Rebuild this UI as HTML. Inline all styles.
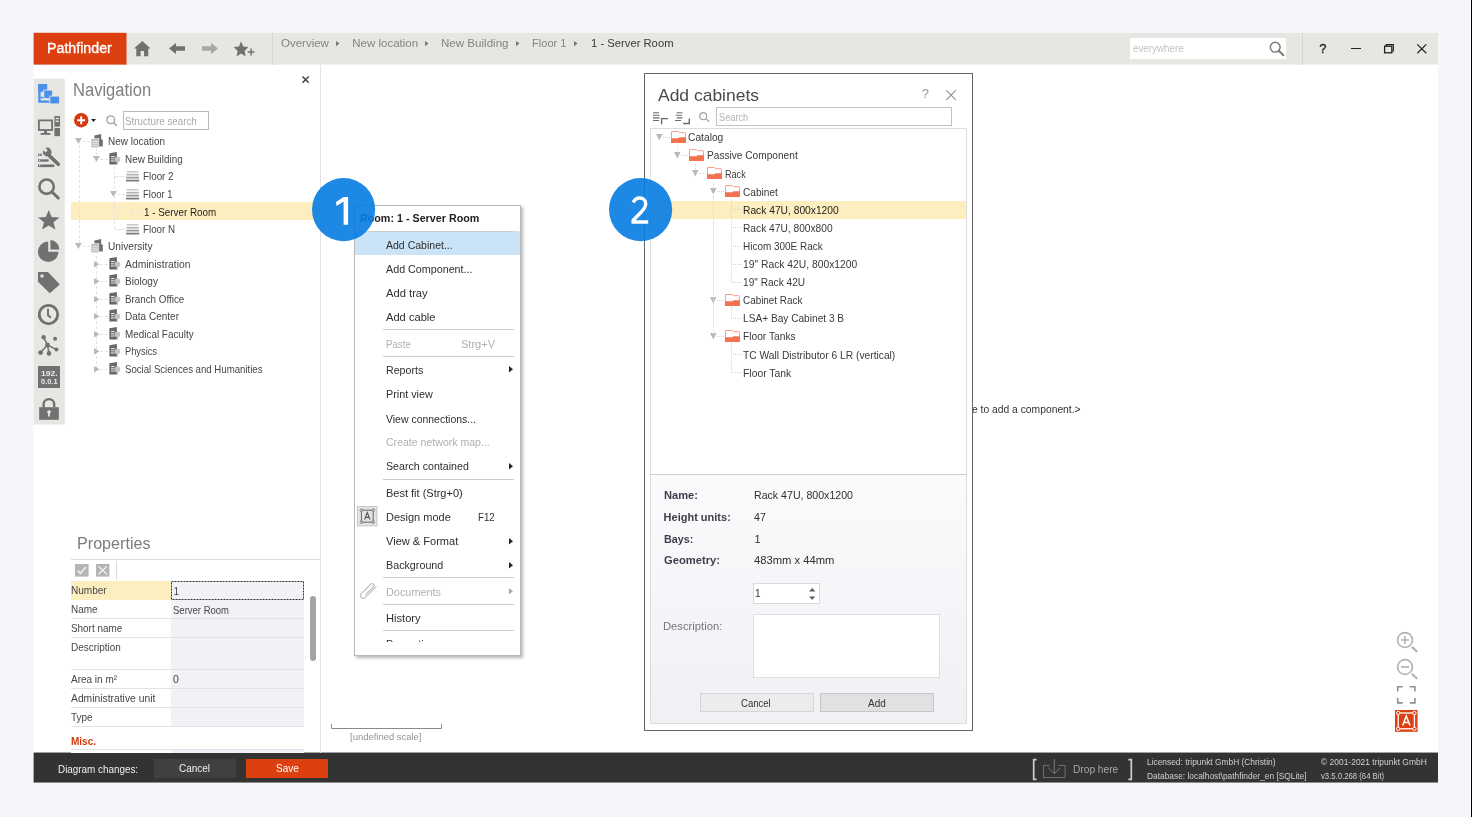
<!DOCTYPE html>
<html><head><meta charset="utf-8"><title>Pathfinder</title>
<style>
*{box-sizing:border-box;margin:0;padding:0}
html,body{width:1472px;height:817px;overflow:hidden;background:#f4f6fa;font-family:"Liberation Sans",sans-serif;}
.a{position:absolute}
svg{position:absolute;overflow:visible}
.t{position:absolute;white-space:nowrap;transform-origin:0 50%}
#app{position:absolute;left:32px;top:32px;width:1407px;height:752px;overflow:hidden}
#w{will-change:transform;position:absolute;left:-32px;top:-32px;width:1472px;height:817px}

</style></head><body>
<div id="app"><div id="w">
<svg style="left:0;top:0" width="1472" height="817" viewBox="0 0 1472 817"><rect x="33.6" y="32.8" width="1404.4" height="749.76" fill="#fff"/><rect x="33.6" y="32.8" width="1404.4" height="31.8" fill="#e6e6e3"/><rect x="33.6" y="32.8" width="92.9" height="31.8" fill="#dc4011"/><rect x="33.6" y="78.7" width="31.2" height="345.8" fill="#e6e6e3"/><rect x="33.6" y="752.55" width="1404.4" height="30" fill="#333"/></svg><div class="t" style="left:47.20px;top:40px;font-size:15.5px;line-height:15.5px;color:#fff;transform:scaleX(0.9169);-webkit-text-stroke:0.35px #fff;">Pathfinder</div><svg style="left:134px;top:40.5px" width="16.6" height="15.3" viewBox="0 0 16.6 15.3"><path d="M8.3 0 L16.6 7.6 L14.3 7.6 L14.3 15.3 L10 15.3 L10 10 L6.6 10 L6.6 15.3 L2.3 15.3 L2.3 7.6 L0 7.6 Z" fill="#717171"/></svg><svg style="left:168.5px;top:43px" width="16" height="11" viewBox="0 0 16 11"><path d="M0 5.5 L7 0 L7 3.2 L16 3.2 L16 7.8 L7 7.8 L7 11 Z" fill="#717171"/></svg><svg style="left:202px;top:43px" width="16" height="11" viewBox="0 0 16 11"><path d="M16 5.5 L9 0 L9 3.2 L0 3.2 L0 7.8 L9 7.8 L9 11 Z" fill="#a8a8a6"/></svg><svg style="left:232.5px;top:40.5px" width="23" height="16" viewBox="0 0 23 16"><path d="M8.10 0.30 L10.22 5.58 L15.52 6.12 L11.52 9.93 L12.68 15.54 L8.10 12.61 L3.52 15.54 L4.68 9.93 L0.68 6.12 L5.98 5.58 Z" fill="#717171"/><path d="M14.7 11 H21.5 M18.1 7.6 V14.4" stroke="#717171" stroke-width="1.5" fill="none"/></svg><div class="a" style="left:272px;top:33px;width:1px;height:31.6px;background:#d6d6d3"></div><div class="t" style="left:281.00px;top:38px;font-size:11.5px;line-height:11.5px;color:#848484;">Overview</div><div class="t" style="left:352.30px;top:38px;font-size:11.5px;line-height:11.5px;color:#848484;">New location</div><div class="t" style="left:441.00px;top:38px;font-size:11.5px;line-height:11.5px;color:#848484;transform:scaleX(1.0056);">New Building</div><div class="t" style="left:532.00px;top:38px;font-size:11.5px;line-height:11.5px;color:#848484;transform:scaleX(0.9638);">Floor 1</div><div class="t" style="left:590.50px;top:38px;font-size:11.5px;line-height:11.5px;color:#3a3a3a;transform:scaleX(0.9780);">1 - Server Room</div><svg style="left:336px;top:40.6px" width="3.6" height="5.2" viewBox="0 0 3.6 5.2"><path d="M0 0 L3.6 2.6 L0 5.2 Z" fill="#777"/></svg><svg style="left:424.5px;top:40.6px" width="3.6" height="5.2" viewBox="0 0 3.6 5.2"><path d="M0 0 L3.6 2.6 L0 5.2 Z" fill="#777"/></svg><svg style="left:515.5px;top:40.6px" width="3.6" height="5.2" viewBox="0 0 3.6 5.2"><path d="M0 0 L3.6 2.6 L0 5.2 Z" fill="#777"/></svg><svg style="left:574px;top:40.6px" width="3.6" height="5.2" viewBox="0 0 3.6 5.2"><path d="M0 0 L3.6 2.6 L0 5.2 Z" fill="#777"/></svg><div class="a" style="left:1130px;top:38px;width:156px;height:20.8px;background:#fff"></div><div class="t" style="left:1133.25px;top:43px;font-size:10.5px;line-height:10.5px;color:#c2c2c2;transform:scaleX(0.9349);">everywhere</div><svg style="left:1268.5px;top:41px" width="16" height="16" viewBox="0 0 16 16"><circle cx="6.2" cy="6.2" r="4.9" fill="none" stroke="#7a7a7a" stroke-width="1.5"/><path d="M9.8 9.8 L14.4 14.2" stroke="#7a7a7a" stroke-width="2" stroke-linecap="round"/></svg><div class="a" style="left:1302px;top:33px;width:1px;height:31.6px;background:#d6d6d3"></div><div class="t" style="left:1319.18px;top:42px;font-size:13px;line-height:13px;color:#222;-webkit-text-stroke:0.3px #222;">?</div><div class="a" style="left:1351px;top:48px;width:9.8px;height:1.2px;background:#222"></div><svg style="left:1383.5px;top:43.7px" width="10" height="9.5" viewBox="0 0 10 9.5"><path d="M2.2 2 V0.6 H9.4 V7 H8" fill="none" stroke="#222" stroke-width="1.1"/><rect x="0.6" y="2.2" width="7.2" height="6.6" fill="none" stroke="#222" stroke-width="1.3"/></svg><svg style="left:1417px;top:43.7px" width="9.6" height="9.6" viewBox="0 0 9.6 9.6"><path d="M0.3 0.3 L9.3 9.3 M9.3 0.3 L0.3 9.3" stroke="#222" stroke-width="1.2"/></svg><div class="a" style="left:320px;top:65px;width:1px;height:688px;background:#e4e4e4"></div><svg style="left:38.3px;top:84px" width="22" height="20.5" viewBox="0 0 22 20.5"><path d="M1.45 7 V17.65 H12.5" fill="none" stroke="#4a8fe8" stroke-width="2.3"/><path d="M2.6 13.6 H6.5" fill="none" stroke="#4a8fe8" stroke-width="1.6"/><rect x="0" y="0" width="9.2" height="7.8" fill="#4a8fe8"/><rect x="5.8" y="6.1" width="8.8" height="8.5" fill="#4a8fe8" stroke="#e6e6e3" stroke-width="0.9"/><rect x="11.8" y="12.1" width="9.8" height="7.8" fill="#4a8fe8" stroke="#e6e6e3" stroke-width="0.9"/></svg><svg style="left:38.3px;top:115.6px" width="22" height="20.5" viewBox="0 0 22 20.5"><rect x="0.9" y="4.4" width="13.2" height="9.6" fill="none" stroke="#717171" stroke-width="1.8"/><rect x="6" y="14.5" width="3" height="2.6" fill="#717171"/><rect x="2.6" y="17" width="9.8" height="1.8" fill="#717171"/><rect x="16.4" y="0" width="5.6" height="20.2" fill="#717171"/><rect x="17.6" y="1.8" width="3.2" height="1.4" fill="#e6e6e3"/><rect x="17.6" y="4.6" width="3.2" height="1.4" fill="#e6e6e3"/><rect x="16.4" y="10.6" width="5.6" height="1.4" fill="#e6e6e3"/></svg><svg style="left:38.3px;top:147.5px" width="22" height="20.5" viewBox="0 0 22 20.5"><path d="M11 7.4 L20.3 16.3" stroke="#717171" stroke-width="3.6" stroke-linecap="round"/><circle cx="9.2" cy="4" r="4.4" fill="#717171"/><path d="M8.6 3.4 L3.6 -1.6" stroke="#e6e6e3" stroke-width="3"/><rect x="0" y="5.7" width="3.8" height="2.2" fill="#717171"/><rect x="0" y="11.3" width="10.6" height="2.4" fill="#717171"/><rect x="0" y="16.5" width="16.2" height="2.6" fill="#717171"/><rect x="1" y="6.3" width="1.2" height="1" fill="#e6e6e3"/><rect x="1" y="12" width="1.2" height="1" fill="#e6e6e3"/><rect x="1" y="17.3" width="1.2" height="1" fill="#e6e6e3"/></svg><svg style="left:38.3px;top:178.7px" width="22" height="20.5" viewBox="0 0 22 20.5"><circle cx="8.6" cy="7.7" r="7.2" fill="none" stroke="#717171" stroke-width="2.6"/><path d="M14 13 L20.2 19" stroke="#717171" stroke-width="3.1" stroke-linecap="round"/></svg><svg style="left:38px;top:210.4px" width="22" height="20.5" viewBox="0 0 22 20.5"><path d="M10.75 0.00 L13.69 6.93 L21.50 7.46 L15.51 12.27 L17.39 19.52 L10.75 15.57 L4.11 19.52 L5.99 12.27 L0.00 7.46 L7.81 6.93 Z" fill="#717171"/></svg><svg style="left:38.3px;top:240.2px" width="22" height="20.5" viewBox="0 0 22 20.5"><path d="M10.2 1.6 A10.2 10.2 0 1 0 20.4 11.8 L10.2 11.8 Z" fill="#717171"/><path d="M12.4 0 A9.4 9.6 0 0 1 21.4 9.6 L12.4 9.6 Z" fill="#717171"/></svg><svg style="left:38px;top:271.8px" width="22" height="20.5" viewBox="0 0 22 20.5"><path d="M0 0 L10 0 L21.8 12.5 L11.8 21.2 L0 9.8 Z" fill="#717171"/><circle cx="4" cy="4" r="1.7" fill="#e6e6e3"/></svg><svg style="left:38.3px;top:303.6px" width="22" height="20.5" viewBox="0 0 22 20.5"><circle cx="10.5" cy="10.6" r="9.2" fill="none" stroke="#717171" stroke-width="2.8"/><path d="M10 4.8 V11.2 L13 13.8" fill="none" stroke="#717171" stroke-width="2"/></svg><svg style="left:38.3px;top:335.2px" width="22" height="20.5" viewBox="0 0 22 20.5"><path d="M5.65 2.3 L9.5 10 L18.4 14.6 M9.5 10 L2.6 17.6 M9.5 10 L11 18.4" stroke="#717171" stroke-width="1.5" fill="none"/><circle cx="5.65" cy="2.3" r="2.2" fill="#717171"/><circle cx="17.1" cy="3.8" r="2" fill="#717171"/><circle cx="9.5" cy="10" r="2.4" fill="#717171"/><circle cx="18.4" cy="14.6" r="2" fill="#717171"/><circle cx="2.6" cy="17.6" r="2.4" fill="#717171"/><circle cx="11" cy="18.4" r="2.3" fill="#717171"/></svg><div class="a" style="left:38.2px;top:366.4px;width:21.6px;height:21.4px;background:#717171"></div><div class="t" style="left:40.60px;top:371px;font-size:6.6px;line-height:6.6px;color:#eee;font-weight:700;transform:scaleX(1.2925);">192.</div><div class="t" style="left:40.60px;top:379px;font-size:6.6px;line-height:6.6px;color:#eee;font-weight:700;transform:scaleX(1.1314);">0.0.1</div><svg style="left:39.2px;top:397.5px" width="20" height="22" viewBox="0 0 20 22"><path d="M4.6 9.4 V6.4 A5.3 5.3 0 0 1 15.2 6.4 V9.4" fill="none" stroke="#717171" stroke-width="2.4"/><rect x="0.2" y="9.2" width="19.6" height="12.6" fill="#717171"/><circle cx="10" cy="14" r="1.8" fill="#e6e6e3"/><rect x="9.1" y="14" width="1.8" height="4.6" fill="#e6e6e3"/></svg><div class="t" style="left:73.20px;top:81px;font-size:18px;line-height:18px;color:#808080;transform:scaleX(0.9193);">Navigation</div><svg style="left:302.4px;top:76.4px" width="7.2" height="7.2" viewBox="0 0 7.2 7.2"><path d="M0.5 0.5 L6.7 6.7 M6.7 0.5 L0.5 6.7" stroke="#444" stroke-width="1.5"/></svg><svg style="left:73.7px;top:113.2px" width="14.4" height="14.4" viewBox="0 0 14.4 14.4"><circle cx="7.2" cy="7.2" r="7.2" fill="#d8380f"/><path d="M3.2 7.2 H11.2 M7.2 3.2 V11.2" stroke="#fff" stroke-width="2"/></svg><svg style="left:90.6px;top:119px" width="5" height="3" viewBox="0 0 5 3"><path d="M0 0 H5 L2.5 3 Z" fill="#222"/></svg><svg style="left:106.2px;top:114.6px" width="11.4" height="11.4" viewBox="0 0 11.4 11.4"><circle cx="4.7" cy="4.7" r="3.9" fill="none" stroke="#a2a2a2" stroke-width="1.3"/><path d="M7.5 7.5 L10.8 10.8" stroke="#a2a2a2" stroke-width="1.6"/></svg><div class="a" style="left:123px;top:111px;width:86.2px;height:18.6px;border:1px solid #b9b9b9;background:#fff"></div><div class="t" style="left:125.40px;top:116px;font-size:10.5px;line-height:10.5px;color:#a9a9a9;transform:scaleX(0.9319);">Structure search</div><div class="a" style="left:71px;top:202.3px;width:249px;height:17.4px;background:#fdeec0"></div><div class="a" style="left:78.5px;top:145px;width:0;height:98px;border-left:1px dashed #e4e4e4"></div><div class="a" style="left:96px;top:148px;width:0;height:7px;border-left:1px dashed #e4e4e4"></div><div class="a" style="left:113.5px;top:166px;width:0;height:63px;border-left:1px dashed #e4e4e4"></div><div class="a" style="left:131px;top:202px;width:0;height:9px;border-left:1px dashed #e4e4e4"></div><div class="a" style="left:96px;top:251px;width:0;height:118px;border-left:1px dashed #e4e4e4"></div><div class="t" style="left:107.90px;top:136px;font-size:10.5px;line-height:10.5px;color:#454545;transform:scaleX(0.9480);">New location</div><svg style="left:91px;top:134.29999999999998px" width="12" height="13.6" viewBox="0 0 12 13.6"><path d="M3.4 1.4 L10.2 0 V5.6 H11.8 V12.4 H3.4 Z" fill="#6e6e6e"/><rect x="0" y="4.6" width="7.9" height="9" fill="#bdbdbd" stroke="#fff" stroke-width="0.5"/><path d="M1.2 7.3 H6.8 M1.2 9.3 H6.8 M1.2 11.3 H6.8" stroke="#f4f4f4" stroke-width="0.8"/></svg><svg style="left:75.3px;top:137.7px" width="6.8" height="6" viewBox="0 0 6.8 6"><path d="M0 0 H6.8 L3.4 6 Z" fill="#b9b9b9"/></svg><div class="a" style="left:82.8px;top:140.7px;width:7.200000000000003px;height:0;border-top:1px dashed #e4e4e4"></div><div class="t" style="left:125.30px;top:154px;font-size:10.5px;line-height:10.5px;color:#454545;transform:scaleX(0.9413);">New Building</div><svg style="left:109px;top:151.9px" width="11.4" height="12.8" viewBox="0 0 11.4 12.8"><path d="M0.4 1.2 L7.9 0 V12.4 H0.4 Z" fill="#676767"/><path d="M2 4.6 H5.6 M2 6.8 H5.2 M2 9 H5.6" stroke="#f4f4f4" stroke-width="1"/><circle cx="8.4" cy="7.4" r="2.8" fill="#c4c4c4"/><rect x="7.8" y="10" width="1.2" height="2.8" fill="#c4c4c4"/></svg><svg style="left:92.8px;top:155.6px" width="6.8" height="6" viewBox="0 0 6.8 6"><path d="M0 0 H6.8 L3.4 6 Z" fill="#b9b9b9"/></svg><div class="a" style="left:100.3px;top:158.6px;width:7.700000000000003px;height:0;border-top:1px dashed #e4e4e4"></div><div class="t" style="left:142.90px;top:171px;font-size:10.5px;line-height:10.5px;color:#454545;transform:scaleX(0.9361);">Floor 2</div><svg style="left:125.9px;top:171.0px" width="13.2" height="10.8" viewBox="0 0 13.2 10.8"><path d="M0.8 0.8 H12.4" stroke="#c6c6c6" stroke-width="1.5"/><path d="M0.4 3.7 H12.8" stroke="#b1b1b1" stroke-width="1.6"/><path d="M0.2 6.6 H13" stroke="#9a9a9a" stroke-width="1.8"/><path d="M0 9.6 H13.2" stroke="#7c7c7c" stroke-width="1.8"/></svg><div class="a" style="left:114.5px;top:175.7px;width:10px;height:0;border-top:1px dashed #e4e4e4"></div><div class="t" style="left:142.90px;top:189px;font-size:10.5px;line-height:10.5px;color:#454545;transform:scaleX(0.9055);">Floor 1</div><svg style="left:125.9px;top:188.9px" width="13.2" height="10.8" viewBox="0 0 13.2 10.8"><path d="M0.8 0.8 H12.4" stroke="#c6c6c6" stroke-width="1.5"/><path d="M0.4 3.7 H12.8" stroke="#b1b1b1" stroke-width="1.6"/><path d="M0.2 6.6 H13" stroke="#9a9a9a" stroke-width="1.8"/><path d="M0 9.6 H13.2" stroke="#7c7c7c" stroke-width="1.8"/></svg><svg style="left:110.3px;top:190.6px" width="6.8" height="6" viewBox="0 0 6.8 6"><path d="M0 0 H6.8 L3.4 6 Z" fill="#b9b9b9"/></svg><div class="a" style="left:117.8px;top:193.6px;width:7.0px;height:0;border-top:1px dashed #e4e4e4"></div><div class="t" style="left:143.80px;top:207px;font-size:10.5px;line-height:10.5px;color:#222;transform:scaleX(0.9379);">1 - Server Room</div><div class="a" style="left:131.5px;top:211.6px;width:9px;height:0;border-top:1px dashed #e4e4e4"></div><div class="t" style="left:142.90px;top:224px;font-size:10.5px;line-height:10.5px;color:#454545;transform:scaleX(0.9292);">Floor N</div><svg style="left:125.9px;top:223.9px" width="13.2" height="10.8" viewBox="0 0 13.2 10.8"><path d="M0.8 0.8 H12.4" stroke="#c6c6c6" stroke-width="1.5"/><path d="M0.4 3.7 H12.8" stroke="#b1b1b1" stroke-width="1.6"/><path d="M0.2 6.6 H13" stroke="#9a9a9a" stroke-width="1.8"/><path d="M0 9.6 H13.2" stroke="#7c7c7c" stroke-width="1.8"/></svg><div class="a" style="left:114.5px;top:228.6px;width:10px;height:0;border-top:1px dashed #e4e4e4"></div><div class="t" style="left:107.90px;top:241px;font-size:10.5px;line-height:10.5px;color:#454545;transform:scaleX(0.9654);">University</div><svg style="left:91px;top:239.29999999999998px" width="12" height="13.6" viewBox="0 0 12 13.6"><path d="M3.4 1.4 L10.2 0 V5.6 H11.8 V12.4 H3.4 Z" fill="#6e6e6e"/><rect x="0" y="4.6" width="7.9" height="9" fill="#bdbdbd" stroke="#fff" stroke-width="0.5"/><path d="M1.2 7.3 H6.8 M1.2 9.3 H6.8 M1.2 11.3 H6.8" stroke="#f4f4f4" stroke-width="0.8"/></svg><svg style="left:75.3px;top:242.7px" width="6.8" height="6" viewBox="0 0 6.8 6"><path d="M0 0 H6.8 L3.4 6 Z" fill="#b9b9b9"/></svg><div class="a" style="left:82.8px;top:245.7px;width:7.200000000000003px;height:0;border-top:1px dashed #e4e4e4"></div><div class="t" style="left:125.30px;top:259px;font-size:10.5px;line-height:10.5px;color:#454545;transform:scaleX(0.9845);">Administration</div><svg style="left:109px;top:256.9px" width="11.4" height="12.8" viewBox="0 0 11.4 12.8"><path d="M0.4 1.2 L7.9 0 V12.4 H0.4 Z" fill="#676767"/><path d="M2 4.6 H5.6 M2 6.8 H5.2 M2 9 H5.6" stroke="#f4f4f4" stroke-width="1"/><circle cx="8.4" cy="7.4" r="2.8" fill="#c4c4c4"/><rect x="7.8" y="10" width="1.2" height="2.8" fill="#c4c4c4"/></svg><svg style="left:93.6px;top:260.49999999999994px" width="5.6" height="6.6" viewBox="0 0 5.6 6.6"><path d="M0 0 L5.6 3.3 L0 6.6 Z" fill="#b9b9b9"/></svg><div class="a" style="left:100.3px;top:263.59999999999997px;width:7.700000000000003px;height:0;border-top:1px dashed #e4e4e4"></div><div class="t" style="left:125.30px;top:276px;font-size:10.5px;line-height:10.5px;color:#454545;transform:scaleX(0.9578);">Biology</div><svg style="left:109px;top:274.0px" width="11.4" height="12.8" viewBox="0 0 11.4 12.8"><path d="M0.4 1.2 L7.9 0 V12.4 H0.4 Z" fill="#676767"/><path d="M2 4.6 H5.6 M2 6.8 H5.2 M2 9 H5.6" stroke="#f4f4f4" stroke-width="1"/><circle cx="8.4" cy="7.4" r="2.8" fill="#c4c4c4"/><rect x="7.8" y="10" width="1.2" height="2.8" fill="#c4c4c4"/></svg><svg style="left:93.6px;top:277.59999999999997px" width="5.6" height="6.6" viewBox="0 0 5.6 6.6"><path d="M0 0 L5.6 3.3 L0 6.6 Z" fill="#b9b9b9"/></svg><div class="a" style="left:100.3px;top:280.7px;width:7.700000000000003px;height:0;border-top:1px dashed #e4e4e4"></div><div class="t" style="left:125.30px;top:294px;font-size:10.5px;line-height:10.5px;color:#454545;transform:scaleX(0.9342);">Branch Office</div><svg style="left:109px;top:291.9px" width="11.4" height="12.8" viewBox="0 0 11.4 12.8"><path d="M0.4 1.2 L7.9 0 V12.4 H0.4 Z" fill="#676767"/><path d="M2 4.6 H5.6 M2 6.8 H5.2 M2 9 H5.6" stroke="#f4f4f4" stroke-width="1"/><circle cx="8.4" cy="7.4" r="2.8" fill="#c4c4c4"/><rect x="7.8" y="10" width="1.2" height="2.8" fill="#c4c4c4"/></svg><svg style="left:93.6px;top:295.49999999999994px" width="5.6" height="6.6" viewBox="0 0 5.6 6.6"><path d="M0 0 L5.6 3.3 L0 6.6 Z" fill="#b9b9b9"/></svg><div class="a" style="left:100.3px;top:298.59999999999997px;width:7.700000000000003px;height:0;border-top:1px dashed #e4e4e4"></div><div class="t" style="left:125.30px;top:311px;font-size:10.5px;line-height:10.5px;color:#454545;transform:scaleX(0.9536);">Data Center</div><svg style="left:109px;top:309.0px" width="11.4" height="12.8" viewBox="0 0 11.4 12.8"><path d="M0.4 1.2 L7.9 0 V12.4 H0.4 Z" fill="#676767"/><path d="M2 4.6 H5.6 M2 6.8 H5.2 M2 9 H5.6" stroke="#f4f4f4" stroke-width="1"/><circle cx="8.4" cy="7.4" r="2.8" fill="#c4c4c4"/><rect x="7.8" y="10" width="1.2" height="2.8" fill="#c4c4c4"/></svg><svg style="left:93.6px;top:312.59999999999997px" width="5.6" height="6.6" viewBox="0 0 5.6 6.6"><path d="M0 0 L5.6 3.3 L0 6.6 Z" fill="#b9b9b9"/></svg><div class="a" style="left:100.3px;top:315.7px;width:7.700000000000003px;height:0;border-top:1px dashed #e4e4e4"></div><div class="t" style="left:125.30px;top:329px;font-size:10.5px;line-height:10.5px;color:#454545;transform:scaleX(0.9424);">Medical Faculty</div><svg style="left:109px;top:326.9px" width="11.4" height="12.8" viewBox="0 0 11.4 12.8"><path d="M0.4 1.2 L7.9 0 V12.4 H0.4 Z" fill="#676767"/><path d="M2 4.6 H5.6 M2 6.8 H5.2 M2 9 H5.6" stroke="#f4f4f4" stroke-width="1"/><circle cx="8.4" cy="7.4" r="2.8" fill="#c4c4c4"/><rect x="7.8" y="10" width="1.2" height="2.8" fill="#c4c4c4"/></svg><svg style="left:93.6px;top:330.49999999999994px" width="5.6" height="6.6" viewBox="0 0 5.6 6.6"><path d="M0 0 L5.6 3.3 L0 6.6 Z" fill="#b9b9b9"/></svg><div class="a" style="left:100.3px;top:333.59999999999997px;width:7.700000000000003px;height:0;border-top:1px dashed #e4e4e4"></div><div class="t" style="left:125.30px;top:346px;font-size:10.5px;line-height:10.5px;color:#454545;transform:scaleX(0.8843);">Physics</div><svg style="left:109px;top:344.0px" width="11.4" height="12.8" viewBox="0 0 11.4 12.8"><path d="M0.4 1.2 L7.9 0 V12.4 H0.4 Z" fill="#676767"/><path d="M2 4.6 H5.6 M2 6.8 H5.2 M2 9 H5.6" stroke="#f4f4f4" stroke-width="1"/><circle cx="8.4" cy="7.4" r="2.8" fill="#c4c4c4"/><rect x="7.8" y="10" width="1.2" height="2.8" fill="#c4c4c4"/></svg><svg style="left:93.6px;top:347.59999999999997px" width="5.6" height="6.6" viewBox="0 0 5.6 6.6"><path d="M0 0 L5.6 3.3 L0 6.6 Z" fill="#b9b9b9"/></svg><div class="a" style="left:100.3px;top:350.7px;width:7.700000000000003px;height:0;border-top:1px dashed #e4e4e4"></div><div class="t" style="left:125.30px;top:364px;font-size:10.5px;line-height:10.5px;color:#454545;transform:scaleX(0.9167);">Social Sciences and Humanities</div><svg style="left:109px;top:361.9px" width="11.4" height="12.8" viewBox="0 0 11.4 12.8"><path d="M0.4 1.2 L7.9 0 V12.4 H0.4 Z" fill="#676767"/><path d="M2 4.6 H5.6 M2 6.8 H5.2 M2 9 H5.6" stroke="#f4f4f4" stroke-width="1"/><circle cx="8.4" cy="7.4" r="2.8" fill="#c4c4c4"/><rect x="7.8" y="10" width="1.2" height="2.8" fill="#c4c4c4"/></svg><svg style="left:93.6px;top:365.49999999999994px" width="5.6" height="6.6" viewBox="0 0 5.6 6.6"><path d="M0 0 L5.6 3.3 L0 6.6 Z" fill="#b9b9b9"/></svg><div class="a" style="left:100.3px;top:368.59999999999997px;width:7.700000000000003px;height:0;border-top:1px dashed #e4e4e4"></div><div class="t" style="left:77.00px;top:535px;font-size:17px;line-height:17px;color:#7c7c7c;transform:scaleX(0.9486);">Properties</div><div class="a" style="left:71px;top:559px;width:249px;height:1px;background:#dcdcdf"></div><svg style="left:74.5px;top:564px" width="13.6" height="12.6" viewBox="0 0 13.6 12.6"><rect width="13.6" height="12.6" fill="#b4b4b4"/><path d="M2.6 6.6 L5.4 9.4 L11 3" fill="none" stroke="#f2f2f2" stroke-width="1.5"/></svg><svg style="left:95.8px;top:564px" width="13.4" height="12.6" viewBox="0 0 13.4 12.6"><rect width="13.4" height="12.6" fill="#b4b4b4"/><path d="M2.6 2.4 L10.8 10.2 M10.8 2.4 L2.6 10.2" fill="none" stroke="#f2f2f2" stroke-width="1.3"/></svg><div class="a" style="left:115.6px;top:561px;width:1px;height:19px;background:#dcdcdf"></div><div class="a" style="left:171px;top:580.7px;width:133px;height:169px;background:#f1f2f7"></div><div class="a" style="left:71px;top:580.7px;width:100px;height:19px;background:#fdeec0"></div><svg style="left:171px;top:580.7px" width="133" height="19" viewBox="0 0 133 19"><rect x="0.5" y="0.5" width="132" height="18" fill="none" stroke="#333" stroke-width="1" stroke-dasharray="2 1"/></svg><div class="t" style="left:71.30px;top:585px;font-size:10.5px;line-height:10.5px;color:#454545;transform:scaleX(0.9556);">Number</div><div class="t" style="left:173.60px;top:587px;font-size:10px;line-height:10px;color:#454545;">1</div><div class="t" style="left:71.30px;top:604px;font-size:10.5px;line-height:10.5px;color:#454545;transform:scaleX(0.9500);">Name</div><div class="t" style="left:172.90px;top:605px;font-size:10.5px;line-height:10.5px;color:#454545;transform:scaleX(0.9053);">Server Room</div><div class="t" style="left:71.30px;top:623px;font-size:10.5px;line-height:10.5px;color:#454545;transform:scaleX(0.9432);">Short name</div><div class="t" style="left:71.30px;top:642px;font-size:10.5px;line-height:10.5px;color:#454545;transform:scaleX(0.9480);">Description</div><div class="t" style="left:71.30px;top:674px;font-size:10.5px;line-height:10.5px;color:#454545;transform:scaleX(0.9500);">Area in m²</div><div class="t" style="left:172.90px;top:674px;font-size:10.5px;line-height:10.5px;color:#454545;">0</div><div class="t" style="left:71.30px;top:693px;font-size:10.5px;line-height:10.5px;color:#454545;transform:scaleX(0.9826);">Administrative unit</div><div class="t" style="left:71.30px;top:712px;font-size:10.5px;line-height:10.5px;color:#454545;transform:scaleX(0.9500);">Type</div><div class="t" style="left:71.30px;top:736px;font-size:10.5px;line-height:10.5px;color:#d8380f;font-weight:700;transform:scaleX(0.9500);">Misc.</div><div class="a" style="left:71px;top:618.2px;width:233px;height:1px;background:#e2e2e6"></div><div class="a" style="left:71px;top:637.3px;width:233px;height:1px;background:#e2e2e6"></div><div class="a" style="left:71px;top:668.7px;width:233px;height:1px;background:#e2e2e6"></div><div class="a" style="left:71px;top:687.7px;width:233px;height:1px;background:#e2e2e6"></div><div class="a" style="left:71px;top:706.7px;width:233px;height:1px;background:#e2e2e6"></div><div class="a" style="left:71px;top:725.7px;width:233px;height:1px;background:#e2e2e6"></div><div class="a" style="left:71px;top:748.8px;width:233px;height:1px;background:#e2e2e6"></div><div class="a" style="left:171px;top:727px;width:133px;height:22px;background:#fff"></div><div class="a" style="left:71px;top:749.8px;width:233px;height:3.2px;background:#f1f2f7"></div><div class="a" style="left:71px;top:749.8px;width:100px;height:3.2px;background:#fff"></div><div class="a" style="left:309.6px;top:596.2px;width:6.4px;height:65px;background:#a3a3a3;border-radius:3px"></div><svg style="left:331px;top:723.6px" width="111" height="5" viewBox="0 0 111 5"><path d="M0.5 0 V4.5 H110.5 V0" fill="none" stroke="#8a8a8a" stroke-width="1"/></svg><div class="t" style="left:350.00px;top:732px;font-size:9.5px;line-height:9.5px;color:#929292;transform:scaleX(0.9952);">[undefined scale]</div><div class="t" style="left:971.60px;top:404px;font-size:10.5px;line-height:10.5px;color:#333;transform:scaleX(0.9817);">e to add a component.&gt;</div><svg style="left:1395.5px;top:631px" width="22" height="22" viewBox="0 0 22 22"><circle cx="9" cy="9" r="7.4" fill="none" stroke="#b4b4b4" stroke-width="1.7"/><path d="M5 9 H13 M9 5 V13" stroke="#b4b4b4" stroke-width="1.7"/><path d="M16.4 16.4 L20.6 20.2" stroke="#b4b4b4" stroke-width="2.2" stroke-linecap="round"/></svg><svg style="left:1395.5px;top:657.6px" width="22" height="22" viewBox="0 0 22 22"><circle cx="9" cy="9" r="7.4" fill="none" stroke="#b4b4b4" stroke-width="1.7"/><path d="M5 9 H13" stroke="#b4b4b4" stroke-width="1.7"/><path d="M16.4 16.4 L20.6 20.2" stroke="#b4b4b4" stroke-width="2.2" stroke-linecap="round"/></svg><svg style="left:1397.4px;top:685.8px" width="18.6" height="17.6" viewBox="0 0 18.6 17.6"><path d="M0.7 5.6 V0.7 H5.8 M12.8 0.7 H17.9 V5.6 M17.9 12 V16.9 H12.8 M5.8 16.9 H0.7 V12" fill="none" stroke="#8f8f8f" stroke-width="1.6"/></svg><svg style="left:1395.3px;top:710px" width="22.6" height="21.8" viewBox="0 0 22.6 21.8"><rect width="22.6" height="21.8" fill="#dc4011"/><rect x="3.2" y="3" width="16.2" height="15.8" fill="none" stroke="#fff" stroke-width="1.3"/><circle cx="3.2" cy="3" r="1.7" fill="#dc4011" stroke="#fff" stroke-width="1"/><circle cx="19.4" cy="3" r="1.7" fill="#dc4011" stroke="#fff" stroke-width="1"/><circle cx="3.2" cy="18.8" r="1.7" fill="#dc4011" stroke="#fff" stroke-width="1"/><circle cx="19.4" cy="18.8" r="1.7" fill="#dc4011" stroke="#fff" stroke-width="1"/><path d="M7.6 15.6 L11.3 6 L15 15.6 M9 12.4 H13.6" fill="none" stroke="#fff" stroke-width="1.5"/></svg><div class="a" style="left:354.3px;top:204.6px;width:166.4px;height:451.8px;background:#fff;border:1px solid #b9b9b9;box-shadow:2px 2px 3px rgba(0,0,0,0.28)"></div><div class="a" style="left:355.3px;top:231.2px;width:164.4px;height:24.3px;background:#cbe3f7"></div><div class="t" style="left:359.80px;top:213px;font-size:11px;line-height:11px;color:#222;font-weight:700;transform:scaleX(0.9759);">Room: 1 - Server Room</div><div class="a" style="left:367.5px;top:230.7px;width:146.5px;height:1px;background:#cdcdcd"></div><div class="t" style="left:386.40px;top:240px;font-size:11.5px;line-height:11.5px;color:#2f2f2f;transform:scaleX(0.9151);">Add Cabinet...</div><div class="t" style="left:386.40px;top:264px;font-size:11.5px;line-height:11.5px;color:#2f2f2f;transform:scaleX(0.9331);">Add Component...</div><div class="t" style="left:386.40px;top:288px;font-size:11.5px;line-height:11.5px;color:#2f2f2f;transform:scaleX(0.9737);">Add tray</div><div class="t" style="left:386.40px;top:312px;font-size:11.5px;line-height:11.5px;color:#2f2f2f;transform:scaleX(0.9676);">Add cable</div><div class="t" style="left:386.40px;top:339px;font-size:11.5px;line-height:11.5px;color:#b0b0b0;transform:scaleX(0.8429);">Paste</div><div class="t" style="left:386.40px;top:365px;font-size:11.5px;line-height:11.5px;color:#2f2f2f;transform:scaleX(0.9260);">Reports</div><div class="t" style="left:386.40px;top:389px;font-size:11.5px;line-height:11.5px;color:#2f2f2f;transform:scaleX(0.9386);">Print view</div><div class="t" style="left:386.40px;top:414px;font-size:11.5px;line-height:11.5px;color:#2f2f2f;transform:scaleX(0.9102);">View connections...</div><div class="t" style="left:386.40px;top:437px;font-size:11.5px;line-height:11.5px;color:#b0b0b0;transform:scaleX(0.9174);">Create network map...</div><div class="t" style="left:386.40px;top:461px;font-size:11.5px;line-height:11.5px;color:#2f2f2f;transform:scaleX(0.9250);">Search contained</div><div class="t" style="left:386.40px;top:488px;font-size:11.5px;line-height:11.5px;color:#2f2f2f;transform:scaleX(0.9561);">Best fit (Strg+0)</div><div class="t" style="left:386.40px;top:512px;font-size:11.5px;line-height:11.5px;color:#2f2f2f;transform:scaleX(0.9562);">Design mode</div><div class="t" style="left:386.40px;top:536px;font-size:11.5px;line-height:11.5px;color:#2f2f2f;transform:scaleX(0.9614);">View &amp; Format</div><div class="t" style="left:386.40px;top:560px;font-size:11.5px;line-height:11.5px;color:#2f2f2f;transform:scaleX(0.9336);">Background</div><div class="t" style="left:386.40px;top:587px;font-size:11.5px;line-height:11.5px;color:#b0b0b0;transform:scaleX(0.9455);">Documents</div><div class="t" style="left:386.40px;top:613px;font-size:11.5px;line-height:11.5px;color:#2f2f2f;transform:scaleX(0.9670);">History</div><div class="t" style="left:461.00px;top:339px;font-size:11.5px;line-height:11.5px;color:#b0b0b0;transform:scaleX(0.9582);">Strg+V</div><div class="t" style="left:478.40px;top:512px;font-size:11.5px;line-height:11.5px;color:#2f2f2f;transform:scaleX(0.8473);">F12</div><div class="a" style="left:382.8px;top:329.1px;width:131.2px;height:1px;background:#cdcdcd"></div><div class="a" style="left:382.8px;top:355.9px;width:131.2px;height:1px;background:#cdcdcd"></div><div class="a" style="left:382.8px;top:478.9px;width:131.2px;height:1px;background:#cdcdcd"></div><div class="a" style="left:382.8px;top:577.2px;width:131.2px;height:1px;background:#cdcdcd"></div><div class="a" style="left:382.8px;top:604.0px;width:131.2px;height:1px;background:#cdcdcd"></div><div class="a" style="left:382.8px;top:629.8px;width:131.2px;height:1px;background:#cdcdcd"></div><div class="a" style="left:380px;top:636px;width:100px;height:6.4px;overflow:hidden"><div class="t" style="left:6.4px;top:3px;font-size:11.5px;line-height:11.5px;color:#2f2f2f;transform:scaleX(0.935)">Properties</div></div><svg style="left:508.6px;top:366.3px" width="4" height="6.6" viewBox="0 0 4 6.6"><path d="M0 0 L4 3.3 L0 6.6 Z" fill="#222"/></svg><svg style="left:508.6px;top:462.7px" width="4" height="6.6" viewBox="0 0 4 6.6"><path d="M0 0 L4 3.3 L0 6.6 Z" fill="#222"/></svg><svg style="left:508.6px;top:537.7px" width="4" height="6.6" viewBox="0 0 4 6.6"><path d="M0 0 L4 3.3 L0 6.6 Z" fill="#222"/></svg><svg style="left:508.6px;top:561.7px" width="4" height="6.6" viewBox="0 0 4 6.6"><path d="M0 0 L4 3.3 L0 6.6 Z" fill="#222"/></svg><svg style="left:508.6px;top:588.0px" width="4" height="6.6" viewBox="0 0 4 6.6"><path d="M0 0 L4 3.3 L0 6.6 Z" fill="#aaa"/></svg><svg style="left:357.3px;top:506.2px" width="20.4" height="20.4" viewBox="0 0 20.4 20.4"><rect x="0.5" y="0.5" width="19.4" height="19.4" fill="#e3e3e3" stroke="#c6c6c6" stroke-width="1"/><rect x="4.4" y="4.2" width="11.8" height="12" fill="none" stroke="#666" stroke-width="1"/><circle cx="4.4" cy="4.2" r="1.3" fill="#e3e3e3" stroke="#666" stroke-width="0.8"/><circle cx="16.2" cy="4.2" r="1.3" fill="#e3e3e3" stroke="#666" stroke-width="0.8"/><circle cx="4.4" cy="16.2" r="1.3" fill="#e3e3e3" stroke="#666" stroke-width="0.8"/><circle cx="16.2" cy="16.2" r="1.3" fill="#e3e3e3" stroke="#666" stroke-width="0.8"/><path d="M7.6 13.6 L10.3 6.6 L13 13.6 M8.6 11.4 H12" fill="none" stroke="#555" stroke-width="1.1"/></svg><svg style="left:357.6px;top:582.8px" width="19" height="17" viewBox="0 0 19 17"><g transform="translate(0,12.2) rotate(-45) scale(1.1)"><path d="M5.2 4.5 H15.3 A1.7 1.7 0 0 0 15.3 1.1 H3.1 A2.5 2.5 0 0 0 3.1 6.1 H17.2" fill="none" stroke="#bcbcbc" stroke-width="1.05" stroke-linecap="round"/></g></svg><div class="a" style="left:644.3px;top:73px;width:328.6px;height:657.6px;background:#fff;border:1px solid #666"></div><div class="t" style="left:658.20px;top:87px;font-size:17px;line-height:17px;color:#4a4a4a;transform:scaleX(1.0275);">Add cabinets</div><div class="t" style="left:921.68px;top:87px;font-size:13px;line-height:13px;color:#969696;">?</div><svg style="left:946px;top:89.8px" width="10.2" height="10.2" viewBox="0 0 10.2 10.2"><path d="M0.4 0.4 L9.8 9.8 M9.8 0.4 L0.4 9.8" stroke="#8e8e8e" stroke-width="1.1"/></svg><svg style="left:653px;top:111.8px" width="15" height="12.2" viewBox="0 0 15 12.2"><path d="M0 0.7 H6 M0 3.3 H6.6 M0 5.9 H6.6 M0 8.5 H6" stroke="#6a6a6a" stroke-width="1.1"/><path d="M8.6 12.2 V6.6 H15" fill="none" stroke="#6a6a6a" stroke-width="1.4"/></svg><svg style="left:675px;top:111.8px" width="15" height="12.2" viewBox="0 0 15 12.2"><path d="M1.6 0.7 H7.4 M0.8 3.3 H7 M1.6 5.9 H7.4 M0 8.5 H6" stroke="#6a6a6a" stroke-width="1.1"/><path d="M8.2 11.5 H14.3 V6.4" fill="none" stroke="#6a6a6a" stroke-width="1.4"/></svg><svg style="left:699px;top:112px" width="11" height="10.4" viewBox="0 0 11 10.4"><circle cx="4.2" cy="4.2" r="3.5" fill="none" stroke="#a9a9a9" stroke-width="1.2"/><path d="M6.8 6.8 L10.4 9.8" stroke="#a9a9a9" stroke-width="1.4"/></svg><div class="a" style="left:716.2px;top:107.3px;width:236px;height:19.2px;background:#fff;border:1px solid #c2c2c2"></div><div class="t" style="left:718.60px;top:112px;font-size:10.5px;line-height:10.5px;color:#b2b2b2;transform:scaleX(0.8774);">Search</div><div class="a" style="left:650.4px;top:127.6px;width:316.5px;height:596.4px;background:#fff;border:1px solid #dcdcdc"></div><div class="a" style="left:651.4px;top:474.6px;width:314.5px;height:248.4px;background:linear-gradient(#fbfbfd,#f0f0f5)"></div><div class="a" style="left:650.4px;top:474px;width:316.5px;height:1.2px;background:#cfcfcf"></div><div class="a" style="left:651.4px;top:200.6px;width:314.5px;height:18px;background:#fdeec0"></div><div class="t" style="left:688.40px;top:132px;font-size:11px;line-height:11px;color:#3a3a3a;transform:scaleX(0.9309);">Catalog</div><svg style="left:670.9px;top:131.0px" width="14.9" height="12" viewBox="0 0 15.4 12" preserveAspectRatio="none"><path d="M0.5 11.5 V1 Q0.5 0.5 1 0.5 H7.6 L8.8 1.7 H14.4 Q14.9 1.7 14.9 2.2 V11.5 Z" fill="#fff" stroke="#f89a80" stroke-width="1"/><path d="M0 7.3 H7.6 L8.6 6.3 H15.4 V11.4 Q15.4 12 14.8 12 H0.6 Q0 12 0 11.4 Z" fill="#f4714f"/></svg><svg style="left:655.6px;top:133.9px" width="6.6" height="6.6" viewBox="0 0 6.6 6.6"><path d="M0 0 H6.6 L3.3 6.6 Z" fill="#b9b9b9"/></svg><div class="a" style="left:663.0px;top:136.9px;width:7px;height:0;border-top:1px dotted #d6d6d6"></div><div class="t" style="left:706.60px;top:150px;font-size:11px;line-height:11px;color:#3a3a3a;transform:scaleX(0.9213);">Passive Component</div><svg style="left:689.02px;top:149.1px" width="14.9" height="12" viewBox="0 0 15.4 12" preserveAspectRatio="none"><path d="M0.5 11.5 V1 Q0.5 0.5 1 0.5 H7.6 L8.8 1.7 H14.4 Q14.9 1.7 14.9 2.2 V11.5 Z" fill="#fff" stroke="#f89a80" stroke-width="1"/><path d="M0 7.3 H7.6 L8.6 6.3 H15.4 V11.4 Q15.4 12 14.8 12 H0.6 Q0 12 0 11.4 Z" fill="#f4714f"/></svg><svg style="left:673.65px;top:152.0px" width="6.6" height="6.6" viewBox="0 0 6.6 6.6"><path d="M0 0 H6.6 L3.3 6.6 Z" fill="#b9b9b9"/></svg><div class="a" style="left:681.05px;top:155.0px;width:7px;height:0;border-top:1px dotted #d6d6d6"></div><div class="t" style="left:724.80px;top:169px;font-size:11px;line-height:11px;color:#3a3a3a;transform:scaleX(0.8259);">Rack</div><svg style="left:707.14px;top:167.2px" width="14.9" height="12" viewBox="0 0 15.4 12" preserveAspectRatio="none"><path d="M0.5 11.5 V1 Q0.5 0.5 1 0.5 H7.6 L8.8 1.7 H14.4 Q14.9 1.7 14.9 2.2 V11.5 Z" fill="#fff" stroke="#f89a80" stroke-width="1"/><path d="M0 7.3 H7.6 L8.6 6.3 H15.4 V11.4 Q15.4 12 14.8 12 H0.6 Q0 12 0 11.4 Z" fill="#f4714f"/></svg><svg style="left:691.7px;top:170.1px" width="6.6" height="6.6" viewBox="0 0 6.6 6.6"><path d="M0 0 H6.6 L3.3 6.6 Z" fill="#b9b9b9"/></svg><div class="a" style="left:699.1px;top:173.1px;width:7px;height:0;border-top:1px dotted #d6d6d6"></div><div class="t" style="left:743.00px;top:187px;font-size:11px;line-height:11px;color:#3a3a3a;transform:scaleX(0.9203);">Cabinet</div><svg style="left:725.26px;top:185.3px" width="14.9" height="12" viewBox="0 0 15.4 12" preserveAspectRatio="none"><path d="M0.5 11.5 V1 Q0.5 0.5 1 0.5 H7.6 L8.8 1.7 H14.4 Q14.9 1.7 14.9 2.2 V11.5 Z" fill="#fff" stroke="#f89a80" stroke-width="1"/><path d="M0 7.3 H7.6 L8.6 6.3 H15.4 V11.4 Q15.4 12 14.8 12 H0.6 Q0 12 0 11.4 Z" fill="#f4714f"/></svg><svg style="left:709.75px;top:188.20000000000002px" width="6.6" height="6.6" viewBox="0 0 6.6 6.6"><path d="M0 0 H6.6 L3.3 6.6 Z" fill="#b9b9b9"/></svg><div class="a" style="left:717.15px;top:191.20000000000002px;width:7px;height:0;border-top:1px dotted #d6d6d6"></div><div class="t" style="left:742.90px;top:205px;font-size:11px;line-height:11px;color:#222;transform:scaleX(0.9315);">Rack 47U, 800x1200</div><div class="a" style="left:732.5px;top:209.3px;width:9px;height:0;border-top:1px dotted #d6d6d6"></div><div class="t" style="left:742.90px;top:223px;font-size:11px;line-height:11px;color:#3a3a3a;transform:scaleX(0.9273);">Rack 47U, 800x800</div><div class="a" style="left:732.5px;top:227.4px;width:9px;height:0;border-top:1px dotted #d6d6d6"></div><div class="t" style="left:742.90px;top:241px;font-size:11px;line-height:11px;color:#3a3a3a;transform:scaleX(0.9052);">Hicom 300E Rack</div><div class="a" style="left:732.5px;top:245.50000000000003px;width:9px;height:0;border-top:1px dotted #d6d6d6"></div><div class="t" style="left:742.90px;top:259px;font-size:11px;line-height:11px;color:#3a3a3a;transform:scaleX(0.9374);">19" Rack 42U, 800x1200</div><div class="a" style="left:732.5px;top:263.6px;width:9px;height:0;border-top:1px dotted #d6d6d6"></div><div class="t" style="left:742.90px;top:277px;font-size:11px;line-height:11px;color:#3a3a3a;transform:scaleX(0.9200);">19" Rack 42U</div><div class="a" style="left:732.5px;top:281.70000000000005px;width:9px;height:0;border-top:1px dotted #d6d6d6"></div><div class="t" style="left:743.00px;top:295px;font-size:11px;line-height:11px;color:#3a3a3a;transform:scaleX(0.8994);">Cabinet Rack</div><svg style="left:725.26px;top:293.90000000000003px" width="14.9" height="12" viewBox="0 0 15.4 12" preserveAspectRatio="none"><path d="M0.5 11.5 V1 Q0.5 0.5 1 0.5 H7.6 L8.8 1.7 H14.4 Q14.9 1.7 14.9 2.2 V11.5 Z" fill="#fff" stroke="#f89a80" stroke-width="1"/><path d="M0 7.3 H7.6 L8.6 6.3 H15.4 V11.4 Q15.4 12 14.8 12 H0.6 Q0 12 0 11.4 Z" fill="#f4714f"/></svg><svg style="left:709.75px;top:296.80000000000007px" width="6.6" height="6.6" viewBox="0 0 6.6 6.6"><path d="M0 0 H6.6 L3.3 6.6 Z" fill="#b9b9b9"/></svg><div class="a" style="left:717.15px;top:299.80000000000007px;width:7px;height:0;border-top:1px dotted #d6d6d6"></div><div class="t" style="left:742.90px;top:313px;font-size:11px;line-height:11px;color:#3a3a3a;transform:scaleX(0.9211);">LSA+ Bay Cabinet 3 B</div><div class="a" style="left:732.5px;top:317.90000000000003px;width:9px;height:0;border-top:1px dotted #d6d6d6"></div><div class="t" style="left:743.00px;top:331px;font-size:11px;line-height:11px;color:#3a3a3a;transform:scaleX(0.9284);">Floor Tanks</div><svg style="left:725.26px;top:330.1px" width="14.9" height="12" viewBox="0 0 15.4 12" preserveAspectRatio="none"><path d="M0.5 11.5 V1 Q0.5 0.5 1 0.5 H7.6 L8.8 1.7 H14.4 Q14.9 1.7 14.9 2.2 V11.5 Z" fill="#fff" stroke="#f89a80" stroke-width="1"/><path d="M0 7.3 H7.6 L8.6 6.3 H15.4 V11.4 Q15.4 12 14.8 12 H0.6 Q0 12 0 11.4 Z" fill="#f4714f"/></svg><svg style="left:709.75px;top:333.00000000000006px" width="6.6" height="6.6" viewBox="0 0 6.6 6.6"><path d="M0 0 H6.6 L3.3 6.6 Z" fill="#b9b9b9"/></svg><div class="a" style="left:717.15px;top:336.00000000000006px;width:7px;height:0;border-top:1px dotted #d6d6d6"></div><div class="t" style="left:742.90px;top:350px;font-size:11px;line-height:11px;color:#3a3a3a;transform:scaleX(0.9320);">TC Wall Distributor 6 LR (vertical)</div><div class="a" style="left:732.5px;top:354.1px;width:9px;height:0;border-top:1px dotted #d6d6d6"></div><div class="t" style="left:742.90px;top:368px;font-size:11px;line-height:11px;color:#3a3a3a;transform:scaleX(0.9422);">Floor Tank</div><div class="a" style="left:732.5px;top:372.20000000000005px;width:9px;height:0;border-top:1px dotted #d6d6d6"></div><div class="a" style="left:676.8px;top:146px;width:0;height:5px;border-left:1px dotted #d6d6d6"></div><div class="a" style="left:694.9px;top:164px;width:0;height:5px;border-left:1px dotted #d6d6d6"></div><div class="a" style="left:713px;top:182px;width:0;height:5px;border-left:1px dotted #d6d6d6"></div><div class="a" style="left:713px;top:196px;width:0;height:138px;border-left:1px dotted #d6d6d6"></div><div class="a" style="left:731px;top:199px;width:0;height:84px;border-left:1px dotted #d6d6d6"></div><div class="a" style="left:731px;top:307px;width:0;height:11.5px;border-left:1px dotted #d6d6d6"></div><div class="a" style="left:731px;top:343px;width:0;height:30px;border-left:1px dotted #d6d6d6"></div><div class="t" style="left:663.60px;top:490px;font-size:11px;line-height:11px;color:#3e3e4c;font-weight:700;transform:scaleX(1.0112);">Name:</div><div class="t" style="left:663.60px;top:512px;font-size:11px;line-height:11px;color:#3e3e4c;font-weight:700;">Height units:</div><div class="t" style="left:663.60px;top:534px;font-size:11px;line-height:11px;color:#3e3e4c;font-weight:700;transform:scaleX(0.9800);">Bays:</div><div class="t" style="left:663.60px;top:555px;font-size:11px;line-height:11px;color:#3e3e4c;font-weight:700;transform:scaleX(1.0176);">Geometry:</div><div class="t" style="left:753.50px;top:490px;font-size:11px;line-height:11px;color:#2e2e2e;transform:scaleX(0.9637);">Rack 47U, 800x1200</div><div class="t" style="left:753.50px;top:512px;font-size:11px;line-height:11px;color:#2e2e2e;transform:scaleX(0.9714);">47</div><div class="t" style="left:754.60px;top:534px;font-size:11px;line-height:11px;color:#2e2e2e;">1</div><div class="t" style="left:753.50px;top:555px;font-size:11px;line-height:11px;color:#2e2e2e;transform:scaleX(1.0195);">483mm x 44mm</div><div class="a" style="left:753px;top:583.1px;width:66.8px;height:20.6px;background:#fff;border:1px solid #d9d9d9"></div><div class="t" style="left:755.00px;top:589px;font-size:10px;line-height:10px;color:#333;">1</div><svg style="left:808.6px;top:587.6px" width="6.4" height="11.8" viewBox="0 0 6.4 11.8"><path d="M0 3.4 L3.2 0 L6.4 3.4 Z M0 8.4 L3.2 11.8 L6.4 8.4 Z" fill="#5a5a5a"/></svg><div class="t" style="left:663.40px;top:621px;font-size:11px;line-height:11px;color:#777;transform:scaleX(1.0210);">Description:</div><div class="a" style="left:753px;top:613.9px;width:187px;height:64.2px;background:#fff;border:1px solid #dedede"></div><div class="a" style="left:700px;top:693.2px;width:113.6px;height:19px;background:#ececec;border:1px solid #d6d6d6"></div><div class="a" style="left:820px;top:693.2px;width:113.8px;height:19px;background:#e1e1e1;border:1px solid #c6c6c6"></div><div class="t" style="left:741.30px;top:698px;font-size:10.5px;line-height:10.5px;color:#333;transform:scaleX(0.9086);">Cancel</div><div class="t" style="left:867.52px;top:698px;font-size:10.5px;line-height:10.5px;color:#333;transform:scaleX(0.9500);">Add</div><div class="t" style="left:58.30px;top:764px;font-size:10.5px;line-height:10.5px;color:#efefef;transform:scaleX(0.9399);">Diagram changes:</div><div class="a" style="left:153.7px;top:759.1px;width:82.7px;height:18.7px;background:#404040"></div><div class="a" style="left:245.6px;top:759.1px;width:82.8px;height:18.7px;background:#dc4011"></div><div class="t" style="left:179.47px;top:763px;font-size:10.5px;line-height:10.5px;color:#f2f2f2;transform:scaleX(0.9500);">Cancel</div><div class="t" style="left:275.63px;top:763px;font-size:10.5px;line-height:10.5px;color:#fff;transform:scaleX(0.9500);">Save</div><svg style="left:1032.6px;top:758.8px" width="4" height="21" viewBox="0 0 4 21"><path d="M3.6 0.6 H0.7 V20.4 H3.6" fill="none" stroke="#cfcfcf" stroke-width="1.7"/></svg><svg style="left:1127.8px;top:758.8px" width="4" height="21" viewBox="0 0 4 21"><path d="M0.4 0.6 H3.3 V20.4 H0.4" fill="none" stroke="#cfcfcf" stroke-width="1.7"/></svg><svg style="left:1043.3px;top:759.4px" width="22.6" height="19" viewBox="0 0 22.6 19"><path d="M7 6.4 H0.5 V18.5 H22.1 V6.4 H15.6" fill="none" stroke="#6f6f6f" stroke-width="1"/><path d="M11.3 0 V14.4 M5.4 8.8 L11.3 14.6 L17.2 8.8" fill="none" stroke="#7d7d7d" stroke-width="1"/></svg><div class="t" style="left:1072.50px;top:764px;font-size:11px;line-height:11px;color:#a9a9a9;transform:scaleX(0.9239);">Drop here</div><div class="t" style="left:1146.50px;top:758px;font-size:9px;line-height:9px;color:#d0d0d0;transform:scaleX(0.9308);">Licensed: tripunkt GmbH (Christin)</div><div class="t" style="left:1146.50px;top:772px;font-size:9px;line-height:9px;color:#d0d0d0;transform:scaleX(0.9305);">Database: localhost\pathfinder_en [SQLite]</div><div class="t" style="left:1320.60px;top:758px;font-size:9px;line-height:9px;color:#d0d0d0;transform:scaleX(0.9387);">© 2001-2021 tripunkt GmbH</div><div class="t" style="left:1320.60px;top:772px;font-size:9px;line-height:9px;color:#d0d0d0;transform:scaleX(0.8593);">v3.5.0.268 (64 Bit)</div><svg style="left:312.0px;top:178.4px" width="63.2" height="63.2" viewBox="0 0 63.2 63.2"><circle cx="31.6" cy="31.6" r="31.6" fill="rgba(5,123,226,0.9)"/></svg><svg style="left:608.8px;top:178.4px" width="63.2" height="63.2" viewBox="0 0 63.2 63.2"><circle cx="31.6" cy="31.6" r="31.6" fill="rgba(5,123,226,0.9)"/></svg><svg style="left:335.7px;top:196.6px" width="12.1" height="27.8" viewBox="0 0 12.1 27.8"><path d="M7.6 0 H12.1 V27.8 H7.6 V4.6 L0.5 9 L0 5 Z" fill="#fff"/></svg><svg style="left:631.3px;top:196.4px" width="17.2" height="28" viewBox="0 0 17.2 28"><path d="M2.2 6.4 C3.6 3.6 6 2 8.8 2 C12.4 2 14.7 4.4 14.7 7.8 C14.7 11 12.8 13.6 9.6 16.8 L2.2 24.2 V26 H17.2" fill="none" stroke="#fff" stroke-width="3.4" stroke-linejoin="miter"/></svg>
</div></div>
<div class="a" style="left:1470px;top:0;width:1px;height:817px;background:#fff"></div>
<div class="a" style="left:1471px;top:0;width:1px;height:817px;background:#000"></div>
</body></html>
